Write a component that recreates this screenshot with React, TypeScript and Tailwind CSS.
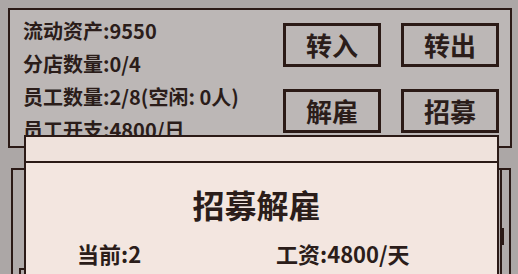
import React from "react";

const font = { fontFamily: '"Noto Sans CJK SC", "Noto Sans", sans-serif' };

function Btn({ label }: { label: string }) {
  return (
    <div className="flex h-[44px] w-[98px] items-center justify-center border-[3px] border-[#2b1a16] text-[26px] font-bold leading-none text-[#2b1d1a]">
      {label}
    </div>
  );
}

export default function App() {
  return (
    <div
      className="relative h-[274px] w-[518px] overflow-hidden bg-[#aca7a6] pt-[8px]"
      style={font}
    >
      {/* top panel */}
      <div className="ml-[8px] flex h-[140px] w-[504px] justify-between border-2 border-[#2b1a16] bg-[#bcb7b6]">
        <div className="pl-[13px] pt-[4px] text-[20px] font-bold leading-[33px] text-[#2b1d1a]">
          <div>流动资产:9550</div>
          <div>分店数量:0/4</div>
          <div>员工数量:2/8(空闲: 0人)</div>
          <div>员工开支:4800/日</div>
        </div>
        <div className="mr-[11px] mt-[13px] grid grid-cols-2 gap-x-[20px] gap-y-[22px] self-start">
          <Btn label="转入" />
          <Btn label="转出" />
          <Btn label="解雇" />
          <Btn label="招募" />
        </div>
      </div>

      {/* second panel */}
      <div className="ml-[11px] mt-[20px] flex h-[200px] w-[500px] border-2 border-[#2b1a16] bg-[#b0abaa]">
        <div className="flex-1 pl-[6px] pt-[98px]">
          <div className="h-[60px] w-[200px] border-2 border-[#2b1a16]" />
        </div>
        <div className="flex w-[9px] flex-col border-l-2 border-[#2b1a16]">
          <div className="-ml-[2px] mt-[58px] h-[17px] w-[4px] bg-[#2b1a16]" />
        </div>
      </div>

      {/* modal */}
      <div className="absolute left-[24px] top-[135px] h-[160px] w-[475px] border-2 border-[#2b1a16] bg-[#f3e6e0]">
        <div className="h-[26px] border-b-2 border-[#2b1a16] bg-[#efe2dc]" />
        <div className="pr-[10px] pt-[20px] text-center text-[32px] font-bold leading-[42px] text-[#2b1d1a]">
          招募解雇
        </div>
        <div className="mt-[13px] flex pl-[51px] text-[22px] font-bold leading-[30px] text-[#2b1d1a]">
          <div className="w-[199px]">当前:2</div>
          <div>工资:4800/天</div>
        </div>
      </div>
    </div>
  );
}
